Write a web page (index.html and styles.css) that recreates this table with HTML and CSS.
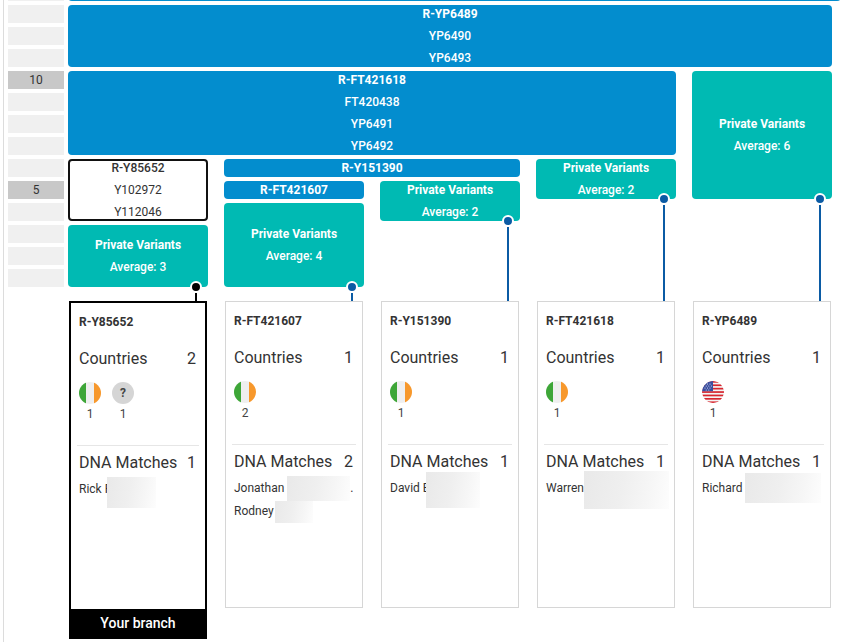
FILE: index.html
```html
<!DOCTYPE html>
<html lang="en">
<head>
<meta charset="utf-8">
<title>Branch tree</title>
<link rel="stylesheet" href="styles.css">
</head>
<body>
<div class="frame">
  <div class="tree">
    <!-- row labels -->
    <div class="lbl r1"></div>
    <div class="lbl r2"></div>
    <div class="lbl r3"></div>
    <div class="lbl r4"></div>
    <div class="lbl r5 hl">10</div>
    <div class="lbl r6"></div>
    <div class="lbl r7"></div>
    <div class="lbl r8"></div>
    <div class="lbl r9"></div>
    <div class="lbl r10 hl">5</div>
    <div class="lbl r11"></div>
    <div class="lbl r12"></div>
    <div class="lbl r13"></div>
    <div class="lbl r14"></div>

    <div class="blk blue top-strip"></div>

    <div class="blk blue b-yp6489">
      <span class="strong">R-YP6489</span>
      <span>YP6490</span>
      <span>YP6493</span>
    </div>

    <div class="blk blue b-ft421618">
      <span class="strong">R-FT421618</span>
      <span>FT420438</span>
      <span>YP6491</span>
      <span>YP6492</span>
    </div>

    <div class="blk teal t-e">
      <span class="strong">Private Variants</span>
      <span>Average: 6</span>
      <i class="dot link-long"></i>
    </div>

    <div class="blk own b-y85652">
      <span class="mid">R-Y85652</span>
      <span>Y102972</span>
      <span>Y112046</span>
    </div>

    <div class="blk blue bar b-y151390"><span class="strong">R-Y151390</span></div>

    <div class="blk teal t-d">
      <span class="strong">Private Variants</span>
      <span>Average: 2</span>
      <i class="dot link-long"></i>
    </div>

    <div class="blk blue bar b-ft421607"><span class="strong">R-FT421607</span></div>

    <div class="blk teal t-c">
      <span class="strong">Private Variants</span>
      <span>Average: 2</span>
      <i class="dot link-mid"></i>
    </div>

    <div class="blk teal t-b">
      <span class="strong">Private Variants</span>
      <span>Average: 4</span>
      <i class="dot link-short"></i>
    </div>

    <div class="blk teal t-a">
      <span class="strong">Private Variants</span>
      <span>Average: 3</span>
      <i class="dot dark link-short"></i>
    </div>

    <!-- cards -->
    <div class="card mine c-a">
      <div class="card-body">
        <div class="card-title">R-Y85652</div>
        <div class="stat"><span>Countries</span><span>2</span></div>
        <div class="flags">
          <div class="flag-item"><span class="flag ie"></span><span class="cnt">1</span></div>
          <div class="flag-item"><span class="flag unk">?</span><span class="cnt">1</span></div>
        </div>
        <div class="divider"></div>
        <div class="stat"><span>DNA Matches</span><span>1</span></div>
        <div class="names">
          <div>Rick F<span class="blur bl-rick"></span></div>
        </div>
      </div>
      <div class="card-foot">Your branch</div>
    </div>

    <div class="card c-b">
      <div class="card-body">
        <div class="card-title">R-FT421607</div>
        <div class="stat"><span>Countries</span><span>1</span></div>
        <div class="flags">
          <div class="flag-item"><span class="flag ie"></span><span class="cnt">2</span></div>
        </div>
        <div class="divider"></div>
        <div class="stat"><span>DNA Matches</span><span>2</span></div>
        <div class="names">
          <div>Jonathan <span class="blur bl-jon"></span>.</div>
          <div>Rodney <span class="blur bl-rod"></span></div>
        </div>
      </div>
    </div>

    <div class="card c-c">
      <div class="card-body">
        <div class="card-title">R-Y151390</div>
        <div class="stat"><span>Countries</span><span>1</span></div>
        <div class="flags">
          <div class="flag-item"><span class="flag ie"></span><span class="cnt">1</span></div>
        </div>
        <div class="divider"></div>
        <div class="stat"><span>DNA Matches</span><span>1</span></div>
        <div class="names">
          <div>David E<span class="blur bl-david"></span></div>
        </div>
      </div>
    </div>

    <div class="card c-d">
      <div class="card-body">
        <div class="card-title">R-FT421618</div>
        <div class="stat"><span>Countries</span><span>1</span></div>
        <div class="flags">
          <div class="flag-item"><span class="flag ie"></span><span class="cnt">1</span></div>
        </div>
        <div class="divider"></div>
        <div class="stat"><span>DNA Matches</span><span>1</span></div>
        <div class="names">
          <div>Warren<span class="blur bl-warren"></span></div>
        </div>
      </div>
    </div>

    <div class="card c-e">
      <div class="card-body">
        <div class="card-title">R-YP6489</div>
        <div class="stat"><span>Countries</span><span>1</span></div>
        <div class="flags">
          <div class="flag-item">
            <svg class="flag us" viewBox="0 0 22 22" width="22" height="22" aria-hidden="true">
              <defs><clipPath id="usclip"><circle cx="11" cy="11" r="11"/></clipPath></defs>
              <g clip-path="url(#usclip)">
                <rect x="0" y="0" width="22" height="22" fill="#f4f4f4"/>
                <rect x="0" y="0" width="22" height="1.7" fill="#d8262f"/>
                <rect x="0" y="3.4" width="22" height="1.7" fill="#d8262f"/>
                <rect x="0" y="6.8" width="22" height="1.7" fill="#d8262f"/>
                <rect x="0" y="10.2" width="22" height="1.7" fill="#d8262f"/>
                <rect x="0" y="13.6" width="22" height="1.7" fill="#d8262f"/>
                <rect x="0" y="17" width="22" height="1.7" fill="#d8262f"/>
                <rect x="0" y="20.4" width="22" height="1.7" fill="#d8262f"/>
                <rect x="0" y="0" width="11" height="10.2" fill="#3b4fa0"/>
                <g fill="#fff">
                  <circle cx="3" cy="3" r="0.5"/><circle cx="5.5" cy="3" r="0.5"/><circle cx="8" cy="3" r="0.5"/>
                  <circle cx="4.2" cy="5" r="0.5"/><circle cx="6.8" cy="5" r="0.5"/><circle cx="9.3" cy="5" r="0.5"/>
                  <circle cx="3" cy="7" r="0.5"/><circle cx="5.5" cy="7" r="0.5"/><circle cx="8" cy="7" r="0.5"/>
                  <circle cx="4.2" cy="9" r="0.5"/><circle cx="6.8" cy="9" r="0.5"/>
                </g>
              </g>
            </svg>
            <span class="cnt">1</span>
          </div>
        </div>
        <div class="divider"></div>
        <div class="stat"><span>DNA Matches</span><span>1</span></div>
        <div class="names">
          <div>Richard <span class="blur bl-richard"></span></div>
        </div>
      </div>
    </div>
  </div>
</div>
</body>
</html>
```

FILE: styles.css
```css
html, body {
  margin: 0;
  padding: 0;
  background: #fff;
  overflow: hidden;
}

body {
  font-family: Roboto, "Liberation Sans", Arial, sans-serif;
  color: #333;
  padding-left: 3px;
}

.frame {
  display: flow-root;
  border-left: 1px solid #dcdcdc;
  padding-left: 4px;
  height: 642px;
  box-sizing: border-box;
  overflow: hidden;
}

.tree {
  display: grid;
  grid-template-columns: 56px 4px 140px 16px 140px 16px 140px 16px 140px 16px 140px;
  grid-template-rows: repeat(14, 18px) auto;
  row-gap: 4px;
  margin-top: -17px;
}

/* row labels */
.lbl {
  grid-column: 1 / 2;
  background: #f0f0f0;
  font-size: 12px;
  line-height: 18px;
  text-align: center;
  color: #333;
}
.lbl.hl { background: #c8c8c8; }
.r1 { grid-row: 1; } .r2 { grid-row: 2; } .r3 { grid-row: 3; } .r4 { grid-row: 4; }
.r5 { grid-row: 5; } .r6 { grid-row: 6; } .r7 { grid-row: 7; } .r8 { grid-row: 8; }
.r9 { grid-row: 9; } .r10 { grid-row: 10; } .r11 { grid-row: 11; } .r12 { grid-row: 12; }
.r13 { grid-row: 13; } .r14 { grid-row: 14; }

/* blocks */
.blk {
  position: relative;
  border-radius: 4px;
  display: flex;
  flex-direction: column;
  justify-content: center;
  align-items: center;
  color: #fff;
  font-size: 12px;
  line-height: 22px;
  font-weight: 500;
}
.blk .strong { font-weight: 700; }
.blk .mid { font-weight: 500; }
.blue { background: #038dce; }
.teal { background: #00bab3; }
.own {
  background: #fff;
  border: 2px solid #111;
  color: #333;
  font-weight: 400;
  box-sizing: border-box;
}
.bar { line-height: 18px; }

.top-strip { grid-row: 1; grid-column: 3 / 12; margin-right: -9px; border-radius: 0 0 4px 4px; }
.b-yp6489 { grid-row: 2 / 5; grid-column: 3 / 12; }
.b-ft421618 { grid-row: 5 / 9; grid-column: 3 / 10; }
.t-e { grid-row: 5 / 11; grid-column: 11 / 12; }
.b-y85652 { grid-row: 9 / 12; grid-column: 3 / 4; }
.b-y151390 { grid-row: 9; grid-column: 5 / 8; }
.t-d { grid-row: 9 / 11; grid-column: 9 / 10; }
.b-ft421607 { grid-row: 10; grid-column: 5 / 6; }
.t-c { grid-row: 10 / 12; grid-column: 7 / 8; }
.t-b { grid-row: 11 / 15; grid-column: 5 / 6; }
.t-a { grid-row: 12 / 15; grid-column: 3 / 4; }

/* connector dots */
.dot {
  position: absolute;
  right: 6px;
  bottom: -6px;
  width: 12px;
  height: 12px;
  box-sizing: border-box;
  border: 2px solid #fff;
  border-radius: 50%;
  background: #0b5ba4;
  z-index: 2;
}
.dot::after {
  content: "";
  position: absolute;
  left: 3px;
  top: 10px;
  width: 2px;
  background: #0b5ba4;
}
.dot.dark, .dot.dark::after { background: #000; }
.link-short::after { height: 8px; }
.link-mid::after { height: 74px; }
.link-long::after { height: 96px; }

/* cards */
.card {
  grid-row: 15;
  margin: 10px 1px 0;
  height: 307px;
  box-sizing: border-box;
  border: 1px solid #d6d6d6;
  background: #fff;
  display: flex;
  flex-direction: column;
}
.card.mine {
  border: 2px solid #000;
  height: 338px;
}
.c-a { grid-column: 3 / 4; }
.c-b { grid-column: 5 / 6; }
.c-c { grid-column: 7 / 8; }
.c-d { grid-column: 9 / 10; }
.c-e { grid-column: 11 / 12; }

.card-body {
  flex: 1;
  padding: 8px 8px 0;
}
.card-title {
  font-size: 12px;
  font-weight: 700;
  line-height: 22px;
  color: #333;
  margin-bottom: 15px;
}
.stat {
  display: flex;
  justify-content: space-between;
  font-size: 16px;
  line-height: 22px;
  color: #333;
}
.stat span:last-child { padding-right: 1px; }

.flags {
  display: flex;
  gap: 11px;
  margin-top: 12px;
  height: 63px;
  align-items: flex-start;
}
.flag-item {
  display: flex;
  flex-direction: column;
  align-items: center;
  width: 22px;
}
.flag {
  display: block;
  width: 22px;
  height: 22px;
  border-radius: 50%;
}
.flag.ie {
  background: linear-gradient(to right, #3ea638 0 33.3%, #efefef 33.3% 66.6%, #f7982c 66.6% 100%);
}
.flag.unk {
  background: #d5d5d5;
  color: #444;
  font-size: 12px;
  font-weight: 700;
  line-height: 22px;
  text-align: center;
}
.cnt {
  font-size: 12px;
  line-height: 14px;
  margin-top: 3px;
  color: #444;
}

.divider {
  height: 1px;
  background: #e6e6e6;
  margin: 0 -2px 6px;
}

.names {
  font-size: 12px;
  line-height: 23px;
  color: #333;
  margin-top: 4px;
  white-space: nowrap;
}

.blur {
  display: inline-block;
  vertical-align: top;
  background: linear-gradient(100deg, #e9e9e9 0%, #efefef 45%, #f6f6f6 75%, #fdfdfd 100%);
}
.bl-rick { width: 49px; height: 31px; margin: -1px 0 -7px -4px; }
.bl-jon { width: 63px; height: 25px; margin: -1px 0 -1px 0; }
.bl-rod { width: 38px; height: 22px; margin: 1px 0 0 -2px; }
.bl-david { width: 54px; height: 36px; margin: -5px 0 -8px -4px; }
.bl-warren { width: 85px; height: 38px; margin: -6px 0 -9px 0; }
.bl-richard { width: 76px; height: 30px; margin: -4px 0 -3px 0; }

.card-foot {
  height: 28px;
  background: #000;
  color: #fff;
  font-size: 14px;
  font-weight: 500;
  line-height: 28px;
  text-align: center;
}
```
